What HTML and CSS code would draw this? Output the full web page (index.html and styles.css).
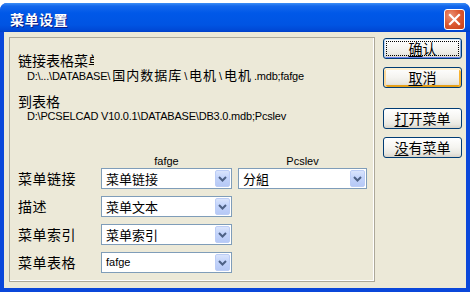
FILE: index.html
```html
<!DOCTYPE html>
<html lang="zh-CN">
<head>
    <meta charset="UTF-8">
    <title>菜单设置</title>
    <link rel="stylesheet" href="styles.css">
</head>
<body>
    <div class="window">
        <div class="titlebar">
            <span class="title">菜单设置</span>
            <span class="close-btn">
                <svg width="13" height="13" viewBox="0 0 13 13">
                    <path d="M2 2 L11 11 M11 2 L2 11" stroke="#fff" stroke-width="2.2" stroke-linecap="square"/>
                </svg>
            </span>
        </div>
        <div class="client">
            <div class="panel">
                <div class="label clip">链接表格菜单</div>
                <div class="path">D:\...\DATABASE\<span class="cjk">国内数据库</span>\<span class="cjk">电机</span>\<span class="cjk">电机</span>.mdb;fafge</div>

                <div class="label second">到表格</div>
                <div class="path">D:\PCSELCAD V10.0.1\DATABASE\DB3.0.mdb;Pcslev</div>

                <div class="colheads">
                    <span></span>
                    <span class="colhead">fafge</span>
                    <span class="colhead">Pcslev</span>
                </div>
                <div class="rows">
                    <div class="rowlabel">菜单链接</div>
                    <div class="combo"><span>菜单链接</span><i class="arrow"></i></div>
                    <div class="combo"><span>分組</span><i class="arrow"></i></div>

                    <div class="rowlabel">描述</div>
                    <div class="combo"><span>菜单文本</span><i class="arrow"></i></div>
                    <span></span>

                    <div class="rowlabel">菜单索引</div>
                    <div class="combo"><span>菜单索引</span><i class="arrow"></i></div>
                    <span></span>

                    <div class="rowlabel">菜单表格</div>
                    <div class="combo"><span class="latin">fafge</span><i class="arrow"></i></div>
                    <span></span>
                </div>
            </div>
            <div class="buttons">
                <div class="btn default"><u>确</u>认</div>
                <div class="btn hot"><u>取</u>消</div>
                <div class="btn spaced"><u>打</u>开菜单</div>
                <div class="btn"><u>没</u>有菜单</div>
            </div>
        </div>
    </div>
</body>
</html>
```

FILE: styles.css
```css
body {
    margin: 0;
    background-color: #fff;
    width: 470px;
    height: 292px;
    overflow: hidden;
    font-family: "Noto Sans CJK SC", "Liberation Sans", sans-serif;
    color: #000;
}
.window {
    margin-top: 3px;
    height: 289px;
    box-sizing: border-box;
    border-radius: 7px 7px 0 0;
    background-color: #0a47da;
    display: flex;
    flex-direction: column;
    overflow: hidden;
}
.titlebar {
    height: 29px;
    flex: none;
    display: flex;
    align-items: center;
    padding: 0 5px 0 10px;
    background: linear-gradient(to bottom, #3d8ff6 0, #1468ec 3px, #0058e8 10px, #0054e2 22px, #0049d6 27px, #0040c8 29px);
}
.title {
    flex: 1;
    color: #fff;
    font-size: 14px;
    font-weight: bold;
    letter-spacing: 0.5px;
    text-shadow: 1px 1px #0a1c85;
    padding-top: 3px;
}
.close-btn {
    width: 19px;
    height: 19px;
    margin-top: 3px;
    border: 1px solid #fff;
    border-radius: 3px;
    background: radial-gradient(circle at 30% 30%, #ea9377 0, #dd5b34 45%, #c73e16 100%);
    display: flex;
    align-items: center;
    justify-content: center;
}
.client {
    flex: 1;
    margin: 0 4px 4px 4px;
    background-color: #ece9d8;
    display: flex;
    align-items: flex-start;
    padding: 5px 0 0 5px;
}
.panel {
    width: 366px;
    height: 245px;
    box-sizing: border-box;
    border: 1px solid #aca899;
    box-shadow: inset -1px -1px 0 #fff;
    padding: 13px 0 0 8px;
}
.label {
    font-size: 14px;
    line-height: 18px;
    height: 18px;
}
.label.clip {
    width: 76px;
    overflow: hidden;
    white-space: nowrap;
}
.label.second {
    margin-top: 11px;
}
.path {
    font-family: "Liberation Sans", "Noto Sans CJK SC", sans-serif;
    font-size: 11px;
    line-height: 12px;
    height: 12px;
    padding-left: 9px;
    letter-spacing: -0.2px;
    white-space: nowrap;
}
.path .cjk {
    font-family: "Noto Sans CJK SC", sans-serif;
    font-size: 13px;
    line-height: 12px;
    letter-spacing: 1px;
    margin: 0 2px;
}
.colheads {
    margin-top: 32px;
    display: grid;
    grid-template-columns: 77px 131px 129px;
    column-gap: 6px;
    height: 14px;
}
.colhead {
    font-family: "Liberation Sans", sans-serif;
    font-size: 11px;
    line-height: 14px;
    text-align: center;
}
.rows {
    display: grid;
    grid-template-columns: 77px 131px 129px;
    grid-auto-rows: 21px;
    column-gap: 6px;
    row-gap: 7px;
}
.rowlabel {
    font-size: 14px;
    line-height: 21px;
    letter-spacing: 0.5px;
}
.combo {
    box-sizing: border-box;
    height: 21px;
    border: 1px solid #7f9db9;
    background-color: #fff;
    display: flex;
    align-items: center;
    padding-left: 4px;
    font-size: 13px;
}
.combo span {
    flex: 1;
    line-height: 19px;
}
.combo .latin {
    font-family: "Liberation Sans", sans-serif;
    font-size: 11px;
}
.arrow {
    width: 15px;
    height: 17px;
    margin-right: 1px;
    box-sizing: border-box;
    border: 1px solid #bccdf6;
    border-radius: 2px;
    background-image: url("data:image/svg+xml,%3Csvg xmlns='http://www.w3.org/2000/svg' width='13' height='15'%3E%3Cpath d='M3 6 L6.5 9.5 L10 6' fill='none' stroke='%234d6185' stroke-width='2'/%3E%3C/svg%3E"), linear-gradient(to bottom, #dae4fc 0, #c5d5fb 40%, #b6c9f6 100%);
}
.buttons {
    margin-left: 8px;
    width: 79px;
    display: flex;
    flex-direction: column;
    gap: 8px;
    padding-top: 1px;
}
.btn {
    position: relative;
    height: 21px;
    box-sizing: border-box;
    border: 1px solid #003c74;
    border-radius: 3px;
    background: linear-gradient(to bottom, #ffffff 0, #f5f4f0 50%, #e9e8e1 80%, #d8d3c8 100%);
    display: flex;
    align-items: center;
    justify-content: center;
    font-size: 14px;
    line-height: 19px;
}
.btn u {
    text-underline-offset: 2px;
}
.btn.default {
    box-shadow: inset 0 1px 0 #cee7ff, inset 1px 0 0 #bcd4f6, inset -1px 0 0 #89ade4, inset 0 -1px 0 #6982ee;
}
.btn.default::after {
    content: "";
    position: absolute;
    left: 2px;
    right: 2px;
    top: 2px;
    bottom: 2px;
    border: 1px dotted #000;
}
.btn.hot {
    box-shadow: inset 0 2px 0 #fff0cf, inset 2px 0 0 #fbd89a, inset -2px 0 0 #f8b330, inset 0 -2px 0 #e5a01a;
}
.btn.spaced {
    margin-top: 12px;
}
```
